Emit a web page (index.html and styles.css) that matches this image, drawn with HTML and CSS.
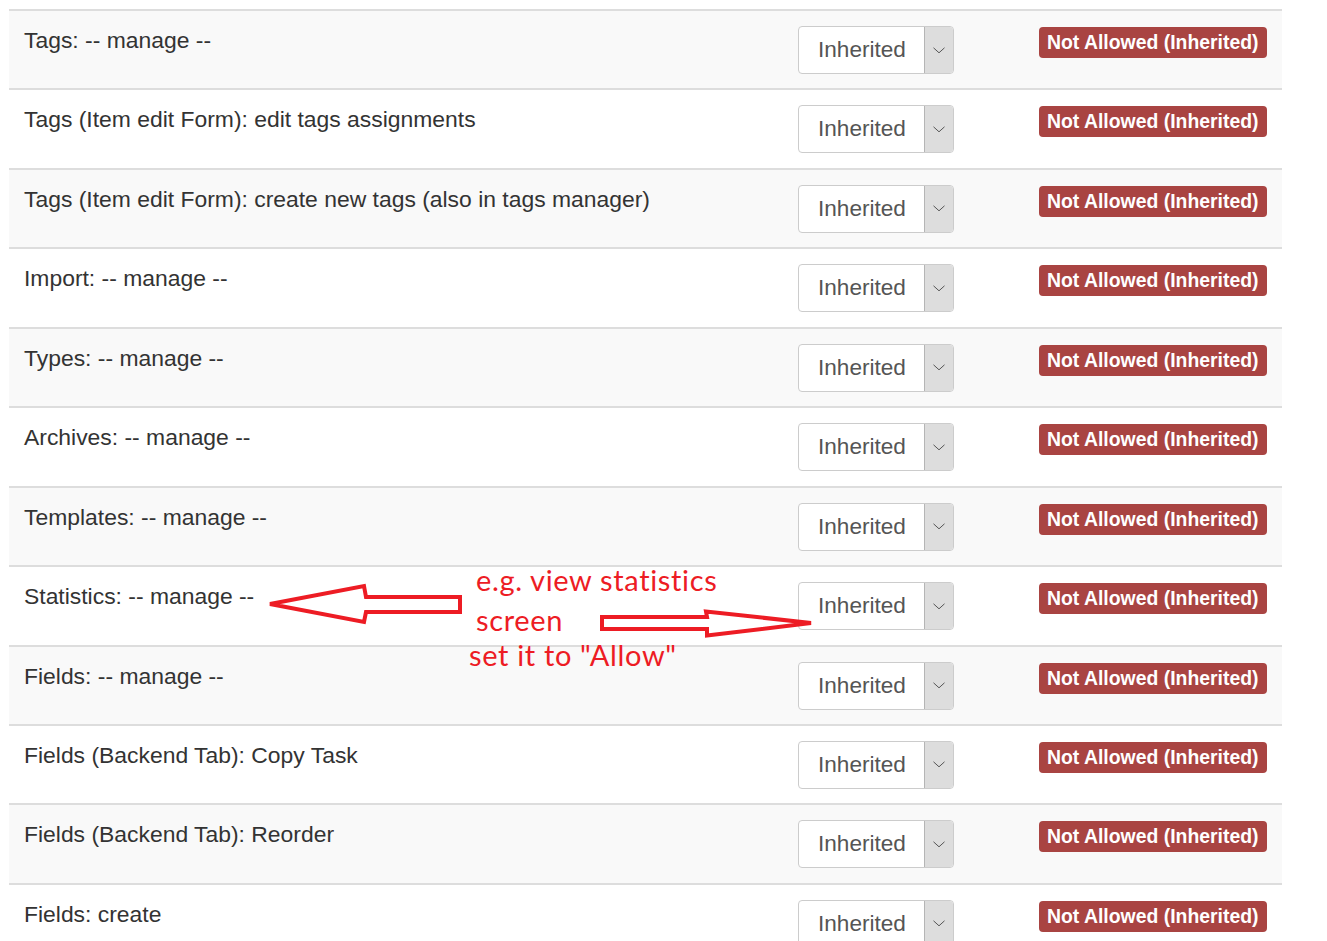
FILE: index.html
```html
<!DOCTYPE html>
<html>
<head>
<meta charset="utf-8">
<link rel="stylesheet" href="styles.css">
</head>
<body>
<div class="page">
  <div class="table">
    <div class="row"><div class="label">Tags: -- manage --</div><div class="sel"><span class="sel-text">Inherited</span><span class="sel-btn"><svg width="12" height="7" viewBox="0 0 12 7"><path d="M0.5 0.8 L6 5.8 L11.5 0.8" fill="none" stroke="#555" stroke-width="1"/></svg></span></div><div class="cell-badge"><span class="badge">Not Allowed (Inherited)</span></div></div>
    <div class="row"><div class="label">Tags (Item edit Form): edit tags assignments</div><div class="sel"><span class="sel-text">Inherited</span><span class="sel-btn"><svg width="12" height="7" viewBox="0 0 12 7"><path d="M0.5 0.8 L6 5.8 L11.5 0.8" fill="none" stroke="#555" stroke-width="1"/></svg></span></div><div class="cell-badge"><span class="badge">Not Allowed (Inherited)</span></div></div>
    <div class="row"><div class="label">Tags (Item edit Form): create new tags (also in tags manager)</div><div class="sel"><span class="sel-text">Inherited</span><span class="sel-btn"><svg width="12" height="7" viewBox="0 0 12 7"><path d="M0.5 0.8 L6 5.8 L11.5 0.8" fill="none" stroke="#555" stroke-width="1"/></svg></span></div><div class="cell-badge"><span class="badge">Not Allowed (Inherited)</span></div></div>
    <div class="row"><div class="label">Import: -- manage --</div><div class="sel"><span class="sel-text">Inherited</span><span class="sel-btn"><svg width="12" height="7" viewBox="0 0 12 7"><path d="M0.5 0.8 L6 5.8 L11.5 0.8" fill="none" stroke="#555" stroke-width="1"/></svg></span></div><div class="cell-badge"><span class="badge">Not Allowed (Inherited)</span></div></div>
    <div class="row"><div class="label">Types: -- manage --</div><div class="sel"><span class="sel-text">Inherited</span><span class="sel-btn"><svg width="12" height="7" viewBox="0 0 12 7"><path d="M0.5 0.8 L6 5.8 L11.5 0.8" fill="none" stroke="#555" stroke-width="1"/></svg></span></div><div class="cell-badge"><span class="badge">Not Allowed (Inherited)</span></div></div>
    <div class="row"><div class="label">Archives: -- manage --</div><div class="sel"><span class="sel-text">Inherited</span><span class="sel-btn"><svg width="12" height="7" viewBox="0 0 12 7"><path d="M0.5 0.8 L6 5.8 L11.5 0.8" fill="none" stroke="#555" stroke-width="1"/></svg></span></div><div class="cell-badge"><span class="badge">Not Allowed (Inherited)</span></div></div>
    <div class="row"><div class="label">Templates: -- manage --</div><div class="sel"><span class="sel-text">Inherited</span><span class="sel-btn"><svg width="12" height="7" viewBox="0 0 12 7"><path d="M0.5 0.8 L6 5.8 L11.5 0.8" fill="none" stroke="#555" stroke-width="1"/></svg></span></div><div class="cell-badge"><span class="badge">Not Allowed (Inherited)</span></div></div>
    <div class="row"><div class="label">Statistics: -- manage --</div><div class="sel"><span class="sel-text">Inherited</span><span class="sel-btn"><svg width="12" height="7" viewBox="0 0 12 7"><path d="M0.5 0.8 L6 5.8 L11.5 0.8" fill="none" stroke="#555" stroke-width="1"/></svg></span></div><div class="cell-badge"><span class="badge">Not Allowed (Inherited)</span></div></div>
    <div class="row"><div class="label">Fields: -- manage --</div><div class="sel"><span class="sel-text">Inherited</span><span class="sel-btn"><svg width="12" height="7" viewBox="0 0 12 7"><path d="M0.5 0.8 L6 5.8 L11.5 0.8" fill="none" stroke="#555" stroke-width="1"/></svg></span></div><div class="cell-badge"><span class="badge">Not Allowed (Inherited)</span></div></div>
    <div class="row"><div class="label">Fields (Backend Tab): Copy Task</div><div class="sel"><span class="sel-text">Inherited</span><span class="sel-btn"><svg width="12" height="7" viewBox="0 0 12 7"><path d="M0.5 0.8 L6 5.8 L11.5 0.8" fill="none" stroke="#555" stroke-width="1"/></svg></span></div><div class="cell-badge"><span class="badge">Not Allowed (Inherited)</span></div></div>
    <div class="row"><div class="label">Fields (Backend Tab): Reorder</div><div class="sel"><span class="sel-text">Inherited</span><span class="sel-btn"><svg width="12" height="7" viewBox="0 0 12 7"><path d="M0.5 0.8 L6 5.8 L11.5 0.8" fill="none" stroke="#555" stroke-width="1"/></svg></span></div><div class="cell-badge"><span class="badge">Not Allowed (Inherited)</span></div></div>
    <div class="row"><div class="label">Fields: create</div><div class="sel"><span class="sel-text">Inherited</span><span class="sel-btn"><svg width="12" height="7" viewBox="0 0 12 7"><path d="M0.5 0.8 L6 5.8 L11.5 0.8" fill="none" stroke="#555" stroke-width="1"/></svg></span></div><div class="cell-badge"><span class="badge">Not Allowed (Inherited)</span></div></div>
  </div>

  <svg class="arrows" width="1327" height="941" viewBox="0 0 1327 941">
    <polygon points="270,604 364,586 366,597 460,597 460,612 366,612 364,622" fill="none" stroke="#ed1c24" stroke-width="4" stroke-linejoin="miter"/>
    <polygon points="811,623 706,611.5 707,617 602,617 602,629 707,629 707,635.5" fill="none" stroke="#ed1c24" stroke-width="4" stroke-linejoin="miter"/>
  </svg>
  <div class="note note-1">e.g. view statistics</div>
  <div class="note note-2">screen</div>
  <div class="note note-3">set it to "Allow"</div>
</div>
</body>
</html>
```

FILE: styles.css
```css
html, body {
  margin: 0;
  padding: 0;
  background: #fff;
}

.page {
  position: relative;
  width: 1327px;
  height: 941px;
  overflow: hidden;
  font-family: "Liberation Sans", Arial, sans-serif;
  color: #333;
}

.table {
  margin: 9px 0 0 9px;
  width: 1273px;
}

.row {
  box-sizing: border-box;
  height: 79.45px;
  border-top: 2px solid #ddd;
  display: grid;
  grid-template-columns: 1fr 241px 243px;
  align-items: start;
  padding: 13px 0 0 15px;
}

.row:nth-child(odd) {
  background: #f9f9f9;
}

.label {
  font-size: 22.9px;
  line-height: 32px;
  white-space: nowrap;
}

.sel {
  box-sizing: border-box;
  width: 156px;
  height: 48px;
  margin-top: 2px;
  border: 1px solid #ccc;
  border-radius: 4px;
  background: #fff;
  display: flex;
  align-items: stretch;
  overflow: hidden;
}

.sel-text {
  flex: 1;
  display: flex;
  align-items: center;
  padding-left: 19px;
  font-size: 22.6px;
  color: #555;
}

.sel-btn {
  width: 28px;
  background: #ddd;
  border-left: 1px solid #b5b5b5;
  display: flex;
  align-items: center;
  justify-content: center;
}

.cell-badge {
  padding-top: 3px;
}

.badge {
  display: inline-block;
  background: #a94442;
  color: #fff;
  font-weight: bold;
  font-size: 19.4px;
  line-height: 31px;
  height: 31px;
  padding: 0 8px;
  border-radius: 4px;
  white-space: nowrap;
}

.arrows {
  position: absolute;
  left: 0;
  top: 0;
  pointer-events: none;
}

.note {
  position: absolute;
  font-family: Lato, "Open Sans", sans-serif;
  font-size: 29px;
  line-height: 30px;
  letter-spacing: 0.65px;
  color: #ed1c24;
  white-space: nowrap;
}

.note-1 { left: 476px; top: 565px; }
.note-2 { left: 476px; top: 605px; }
.note-3 { left: 469px; top: 640px; }
```
